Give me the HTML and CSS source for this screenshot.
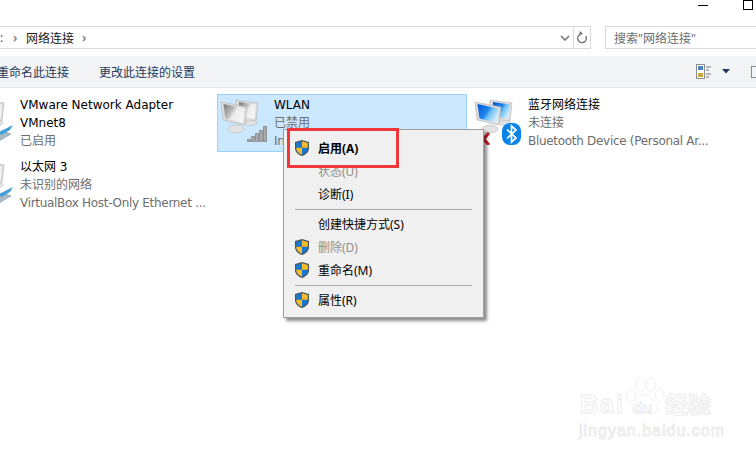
FILE: index.html
```html
<!DOCTYPE html>
<html>
<head>
    <title>网络连接</title>
    <link rel="stylesheet" href="styles.css">
</head>
<body>
    <svg class="defs" width="0" height="0">
        <defs>
            <linearGradient id="grayScreen" x1="0" y1="0" x2="1" y2="0.6">
                <stop offset="0" stop-color="#777"/>
                <stop offset="0.45" stop-color="#bdbdbd"/>
                <stop offset="0.6" stop-color="#ececec"/>
                <stop offset="1" stop-color="#f6f6f6"/>
            </linearGradient>
            <linearGradient id="blueScreen" x1="0" y1="0" x2="1" y2="0.6">
                <stop offset="0" stop-color="#0654d0"/>
                <stop offset="0.5" stop-color="#1f86ee"/>
                <stop offset="0.65" stop-color="#6fc0f6"/>
                <stop offset="1" stop-color="#d6eefc"/>
            </linearGradient>
            <symbol id="monitors" viewBox="0 0 48 48">
                <path class="frame" d="M16 3l22 3-2 18-9 1-11-6z"/>
                <path style="fill:var(--screen)" d="M19 5l17 2.500-1.500 14.500-15.500-2.500z"/>
                <ellipse class="foot" cx="31" cy="26" rx="6" ry="2.500"/>
                <ellipse class="foot" cx="16" cy="32" rx="8" ry="4"/>
                <path class="frame" d="M1 5l26 5-2 18-22-5z"/>
                <path style="fill:var(--screen)" d="M3.500 7l21 4.500-1.500 14.500-17.500-4.500z"/>
            </symbol>
            <symbol id="shield" viewBox="0 0 16 16">
                <path fill="#4a5560" d="M8 0l7 2v6c0 4-3 6.500-7 8-4-1.500-7-4-7-8V2z"/>
                <path fill="#1678d2" d="M8 1.300L2.200 3v4.700H8zM8 7.700v6.900c3-1.300 5.800-3.300 5.800-6.900z"/>
                <path fill="#f7bd2a" d="M8 1.300v6.400h5.800V3zM8 7.700H2.200c0 3.600 2.800 5.600 5.800 6.900z"/>
            </symbol>
            <symbol id="cable" viewBox="0 0 48 48">
                <path fill="#a9b9c4" stroke="#7f919c" stroke-width="0.500" d="M28 41l12-6 5 2-12 7z"/>
                <path fill="#3f9fd8" d="M33 35l14-7-3 5-9 5z"/>
            </symbol>
        </defs>
    </svg>

    <div class="titlebar">
        <span class="win-min"></span>
        <span class="win-max"></span>
    </div>

    <div class="addressbar">
        <div class="path">
            <span class="crumb-cut">:</span>
            <span class="chev">&#8250;</span>
            <span class="crumb">网络连接</span>
            <span class="chev">&#8250;</span>
            <span class="spacer"></span>
            <svg class="drop" width="10" height="6" viewBox="0 0 10 6"><path d="M1 1l4 4 4-4" fill="none" stroke="#777" stroke-width="1.600"/></svg>
            <span class="refresh">
                <svg width="12" height="13" viewBox="0 0 12 13"><path d="M6 3a4.300 4.300 0 1 1-4.300 4.300" fill="none" stroke="#777" stroke-width="1.500" transform="rotate(60 6 7.300)"/><path d="M3.500 0v5l3.500-2.500z" fill="#777"/></svg>
            </span>
        </div>
        <div class="search">搜索"网络连接"</div>
    </div>

    <div class="toolbar">
        <span class="tool">重命名此连接</span>
        <span class="tool">更改此连接的设置</span>
        <span class="spacer"></span>
        <svg class="views" width="16" height="15" viewBox="0 0 16 15">
            <rect x="0.500" y="0.500" width="8" height="14" fill="#fff" stroke="#8b8b8b"/>
            <rect x="2" y="2" width="5" height="4" fill="#4a86c0"/>
            <rect x="2" y="9" width="5" height="4" fill="#c9a63a"/>
            <path d="M10 3h5M10 6h3M10 10h5M10 13h3" stroke="#777"/>
        </svg>
        <svg class="caret" width="8" height="5" viewBox="0 0 8 5"><path d="M0 0h8L4 4.500z" fill="#1e395b"/></svg>
        <span class="pane"></span>
    </div>

    <div class="items">
        <div class="item">
            <svg class="ico gray" width="48" height="48"><use href="#monitors"/><use href="#cable"/></svg>
            <div class="info">
                <div class="name">VMware Network Adapter</div>
                <div class="name">VMnet8</div>
                <div class="sub">已启用</div>
            </div>
        </div>
        <div class="item selected">
            <svg class="ico gray" width="48" height="48">
                <use href="#monitors"/>
                <path class="bars" d="M27.500 42.500h3v2h-3zM31.500 39.500h3v5h-3zM35.500 36.500h3v8h-3zM39.500 33.500h3v11h-3zM43.500 29.500h3v15h-3z"/>
            </svg>
            <div class="info">
                <div class="name">WLAN</div>
                <div class="sub">已禁用</div>
                <div class="sub dev">Intel(R) Dual Band Wireless...</div>
            </div>
        </div>
        <div class="item">
            <svg class="ico blue" width="48" height="48">
                <use href="#monitors"/>
                <path d="M4 36l11 12m0-12l-11 12" stroke="#d3202a" stroke-width="3"/>
                <rect x="28" y="26" width="19" height="22" rx="8" fill="#0a84e8"/>
                <path d="M33 32.500l9 8.500-4.500 4V29l4.500 4-9 8.500" fill="none" stroke="#fff" stroke-width="1.700"/>
            </svg>
            <div class="info">
                <div class="name">蓝牙网络连接</div>
                <div class="sub">未连接</div>
                <div class="sub dev">Bluetooth Device (Personal Ar...</div>
            </div>
        </div>
        <div class="item">
            <svg class="ico gray" width="48" height="48"><use href="#monitors"/><use href="#cable"/></svg>
            <div class="info">
                <div class="name">以太网 3</div>
                <div class="sub">未识别的网络</div>
                <div class="sub dev">VirtualBox Host-Only Ethernet ...</div>
            </div>
        </div>
    </div>

    <div class="menu">
        <div class="mi bold"><svg class="sh" width="16" height="16"><use href="#shield"/></svg>启用(A)</div>
        <div class="mi off">状态(U)</div>
        <div class="mi">诊断(I)</div>
        <div class="sep"></div>
        <div class="mi">创建快捷方式(S)</div>
        <div class="mi off"><svg class="sh" width="16" height="16"><use href="#shield"/></svg>删除(D)</div>
        <div class="mi"><svg class="sh" width="16" height="16"><use href="#shield"/></svg>重命名(M)</div>
        <div class="sep"></div>
        <div class="mi"><svg class="sh" width="16" height="16"><use href="#shield"/></svg>属性(R)</div>
    </div>
    <div class="redbox"></div>

    <div class="mark">
        <svg class="paw" width="40" height="42" viewBox="0 0 46 48">
            <ellipse cx="7" cy="24" rx="5" ry="7"/>
            <ellipse cx="18" cy="11" rx="5.500" ry="8"/>
            <ellipse cx="30" cy="11" rx="5.500" ry="8"/>
            <ellipse cx="40" cy="23" rx="5" ry="7"/>
            <path d="M23 22c7 0 9 7 13 11 4 5 0 12-6 11-3 0-5-1-7-1s-4 1-7 1c-6 1-10-6-6-11 4-4 6-11 13-11z"/>
        </svg>
        <span class="mark-bai">Bai</span>
        <span class="mark-du">du</span>
        <span class="mark-cn">经验</span>
        <span class="mark-url">jingyan.baidu.com</span>
    </div>
</body>
</html>
```

FILE: styles.css
```css
html, body {
    margin: 0;
    height: 457px;
    overflow: hidden;
    background-color: #fff;
}

body {
    position: relative;
    font-family: "Noto Sans", "Noto Sans CJK SC", sans-serif;
    font-size: 12px;
    color: #000;
}

.defs {
    position: absolute;
}

.spacer {
    flex: 1;
}

/* window title bar */
.titlebar {
    height: 26px;
    display: flex;
    justify-content: flex-end;
    align-items: flex-start;
    gap: 35px;
    padding-right: 3px;
    box-sizing: border-box;
}

.win-min {
    width: 10px;
    height: 1px;
    margin-top: 5px;
    background-color: #000;
}

.win-max {
    width: 8px;
    height: 8px;
    border: 1px solid #000;
}

/* address + search */
.addressbar {
    height: 23px;
    display: flex;
    gap: 14px;
    margin-bottom: 7px;
}

.path, .search {
    box-sizing: border-box;
    height: 23px;
    border: 1px solid #d9d9d9;
    display: flex;
    align-items: center;
}

.path {
    width: 591px;
    border-left: none;
    color: #1a1a1a;
}

.crumb-cut {
    width: 13px;
    color: #555;
}

.crumb {
    margin: 0 8px;
    width: 48px;
}

.chev {
    width: 5px;
    color: #888;
    font-weight: bold;
}

.drop {
    margin-right: 3px;
}

.refresh {
    width: 16px;
    height: 21px;
    border-left: 1px solid #d9d9d9;
    display: flex;
    align-items: center;
    justify-content: center;
}

.search {
    flex: 1;
    border-right: none;
    padding-left: 8px;
    color: #6d6d6d;
}

/* command bar */
.toolbar {
    height: 31px;
    background-color: #f3f4f6;
    border-bottom: 1px solid #e8e8e8;
    display: flex;
    align-items: center;
    gap: 30px;
    color: #1e395b;
    overflow: hidden;
}

.tool:first-child {
    margin-left: -3px;
}

.views {
    margin-right: -21px;
}

.caret {
    margin-right: -9px;
    margin-left: 1px;
}

.pane {
    width: 5px;
    height: 12px;
    border: 1px solid #8b8b8b;
    border-right: none;
    box-sizing: border-box;
}

/* connection list */
.items {
    display: grid;
    grid-template-columns: 250px 250px 250px;
    grid-auto-rows: 58px;
    gap: 4px;
    margin: 6px 0 0 -37px;
}

.item {
    box-sizing: border-box;
    border: 1px solid transparent;
    padding: 2px;
    display: flex;
    gap: 6px;
    white-space: nowrap;
    overflow: hidden;
}

.item.selected {
    background-color: #cce8ff;
    border-color: #99d1ff;
}

.ico {
    flex: none;
    --screen: url(#grayScreen);
}

.ico.blue {
    --screen: url(#blueScreen);
}

.frame {
    fill: #dcdcdc;
    stroke: #a8a8a8;
    stroke-width: 0.5;
}

.foot {
    fill: #e2e2e2;
    stroke: #b5b5b5;
    stroke-width: 0.5;
}

.bars {
    fill: #a9a9a9;
    stroke: #6f6f6f;
    stroke-width: 0.6;
}

.info {
    margin-top: -1px;
    line-height: 18px;
    font-family: "DejaVu Sans", "Noto Sans CJK SC", sans-serif;
    font-size: 12px;
}

.sub {
    color: #6d6d6d;
}

.sub.dev {
    letter-spacing: -0.3px;
}

/* right click menu */
.menu {
    position: absolute;
    left: 283px;
    top: 129px;
    width: 201px;
    height: 189px;
    box-sizing: border-box;
    padding: 7px 2px 0;
    background-color: #f0f0f0;
    border: 1px solid #a0a0a0;
    box-shadow: 3px 3px 3px rgba(0, 0, 0, 0.45);
}

.mi {
    position: relative;
    height: 23px;
    line-height: 23px;
    padding-left: 32px;
}

.mi.bold {
    font-weight: bold;
}

.mi.off {
    color: #8f8f8f;
}

.sh {
    position: absolute;
    left: 8px;
    top: 3px;
}

.sep {
    height: 1px;
    margin: 3px 9px;
    background-color: #a9a9a9;
}

.redbox {
    position: absolute;
    left: 287px;
    top: 128px;
    width: 112px;
    height: 40px;
    box-sizing: border-box;
    border: 3px solid #f0383c;
}

/* watermark */
.mark {
    position: absolute;
    left: 578px;
    top: 375px;
    width: 140px;
    height: 70px;
    color: #fff;
    -webkit-text-stroke: 1px #ececec;
    font-family: "Liberation Sans", sans-serif;
    font-weight: bold;
    line-height: 1;
}

.mark span {
    position: absolute;
}

.paw {
    position: absolute;
    left: 47px;
    top: 0;
    fill: #fff;
    stroke: #ececec;
}

.mark-bai {
    left: 2px;
    top: 17px;
    font-size: 25px;
    letter-spacing: 2px;
}

.mark-du {
    left: 56px;
    top: 25px;
    font-size: 15px;
}

.mark-cn {
    left: 87px;
    top: 17px;
    font-size: 23px;
    font-family: "Noto Sans CJK SC", sans-serif;
}

.mark-url {
    left: 1px;
    top: 48px;
    font-size: 16px;
    font-weight: normal;
    letter-spacing: 1px;
}
```
